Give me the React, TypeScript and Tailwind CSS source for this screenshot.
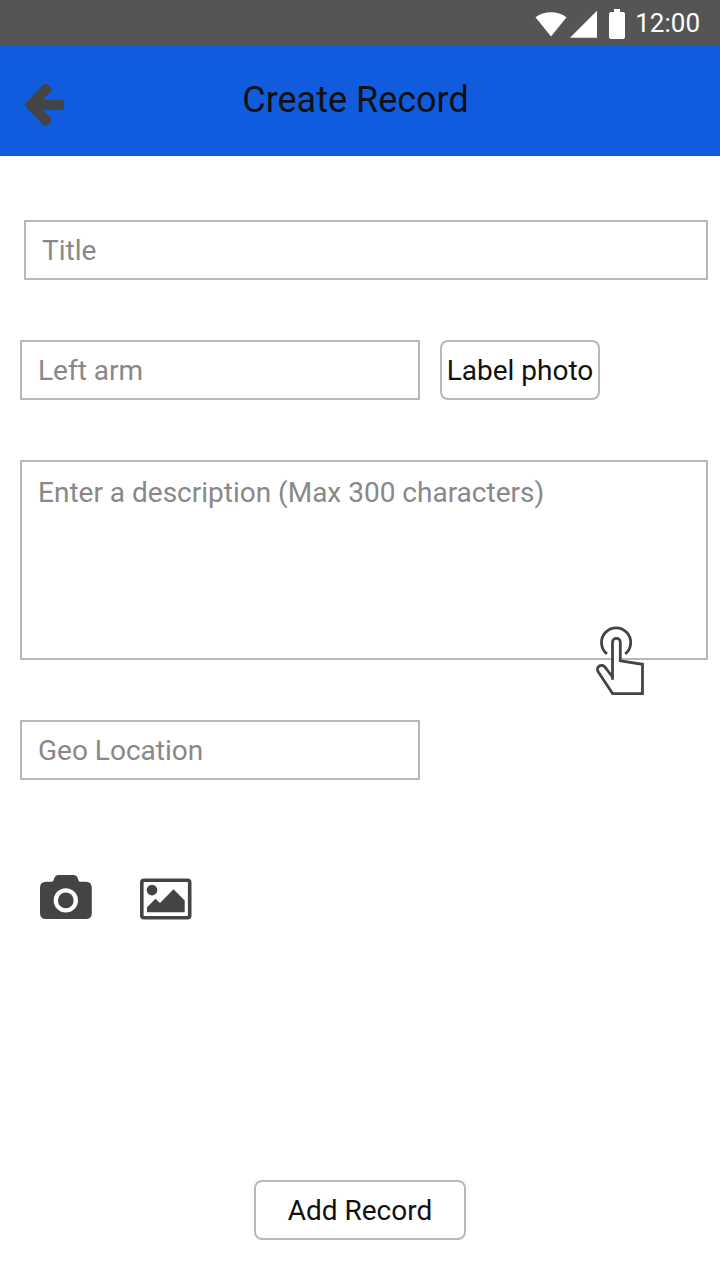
import type { ReactNode } from "react";

function StatusIcons() {
  return (
    <svg width="92" height="32" viewBox="534 8 92 32" fill="#fff" aria-hidden="true">
      <path d="M535.5 17.3C544.2 10.5 557.8 10.5 566.5 17.3L551 36.5Z" />
      <path d="M570 37.7H597V10.7Z" />
      <path d="M614 9h6v3h3a2 2 0 0 1 2 2v23a2 2 0 0 1-2 2h-12a2 2 0 0 1-2-2V14a2 2 0 0 1 2-2h3Z" />
    </svg>
  );
}

function BackArrow() {
  return (
    <svg width="40" height="44" viewBox="25 83 40 44" fill="#444" aria-hidden="true">
      <path d="M25.6 103.2L42.8 85Q45.5 82.4 48.2 85L50.2 87Q52.8 89.6 50.2 92.3L42.7 99.8H61.2Q64 99.8 64 102.6V107.2Q64 110 61.2 110H42.7L50.2 117.5Q52.8 120.2 50.2 122.8L48.2 124.8Q45.5 127.3 42.8 124.7L25.6 106.6Q24.2 104.9 25.6 103.2Z" />
    </svg>
  );
}

function TouchPointer() {
  return (
    <svg
      className="absolute left-[574px] top-[164px]"
      width="52"
      height="72"
      viewBox="594 624 52 72"
      fill="none"
      stroke="#444"
      strokeWidth="2.8"
      aria-hidden="true"
    >
      <path d="M607 653.9A14.6 14.6 0 1 1 625.2 653.9" />
      <path
        fill="#fff"
        d="M612.5 679.7V642.2C612.5 637.1 620.3 637.1 620.3 642.2V660.8L642.5 664.3V693.6H612.6L598.2 671.8C595.2 667 601.9 662.6 605.2 667.4L612.5 677"
      />
    </svg>
  );
}

function CameraIcon() {
  return (
    <svg width="52" height="46" viewBox="40 874 52 46" fill="#444" aria-hidden="true">
      <path d="M46 881.7H51.5Q53.2 881.7 53.6 880.2L54 878.8Q55 875 58.7 875H73.3Q77 875 78 878.8L78.4 880.2Q78.8 881.7 80.3 881.7H85.8Q91.8 881.7 91.8 887.7V913Q91.8 919 85.8 919H46Q40 919 40 913V887.7Q40 881.7 46 881.7Z" />
      <circle cx="65.8" cy="900.4" r="10" stroke="#fff" strokeWidth="4.3" />
    </svg>
  );
}

function PictureIcon() {
  return (
    <svg width="52" height="46" viewBox="140 874 52 46" fill="#444" aria-hidden="true">
      <rect x="141.8" y="880.2" width="47.9" height="37.5" rx="2.2" fill="none" stroke="#444" strokeWidth="3.6" />
      <circle cx="152" cy="890.1" r="5.3" />
      <path d="M147 912.3V907.2L155.5 898.7L160 903.1L173.5 889.3L184.7 900.5V912.3Z" />
    </svg>
  );
}

function Field({ className, children }: { className: string; children: ReactNode }) {
  return (
    <div className={`border-2 border-[#b8b8b8] px-4 text-[28px] text-[#888] ${className}`}>
      {children}
    </div>
  );
}

function Button({ className, children }: { className: string; children: ReactNode }) {
  return (
    <button
      type="button"
      className={`flex h-[60px] items-center justify-center whitespace-nowrap rounded-lg border-2 border-[#b8b8b8] bg-white pt-[2px] text-[28px] text-[#111] ${className}`}
    >
      {children}
    </button>
  );
}

export default function App() {
  return (
    <div className="flex h-[1280px] w-[720px] flex-col overflow-hidden bg-white font-['Roboto',sans-serif]">
      <div className="flex h-[46px] items-start justify-end bg-[#555] pr-5 pt-2 text-white">
        <StatusIcons />
        <span className="ml-[9px] text-[26px] leading-[30px]">12:00</span>
      </div>
      <header className="grid h-[110px] grid-cols-[65px_1fr_74px] items-center bg-[#115bde]">
        <button type="button" aria-label="Back" className="mt-[8px] pl-[25px]">
          <BackArrow />
        </button>
        <h1 className="-mt-[2px] whitespace-nowrap text-center text-[36px] leading-[42px] text-[#111]">
          Create Record
        </h1>
      </header>
      <main className="flex flex-1 flex-col pl-5 pr-3 pt-16">
        <Field className="ml-1 h-[60px] leading-[58px]">Title</Field>
        <div className="mt-[60px] flex gap-5">
          <Field className="h-[60px] w-[400px] leading-[58px]">Left arm</Field>
          <Button className="w-[160px]">Label photo</Button>
        </div>
        <div className="relative mt-[60px]">
          <Field className="h-[200px] pt-[15px] leading-[32px]">
            Enter a description (Max 300 characters)
          </Field>
          <TouchPointer />
        </div>
        <Field className="mt-[60px] h-[60px] w-[400px] leading-[58px]">Geo Location</Field>
        <div className="ml-5 mt-[94px] flex gap-12">
          <CameraIcon />
          <PictureIcon />
        </div>
        <Button className="mb-10 ml-[234px] mt-auto w-[212px]">Add Record</Button>
      </main>
    </div>
  );
}
